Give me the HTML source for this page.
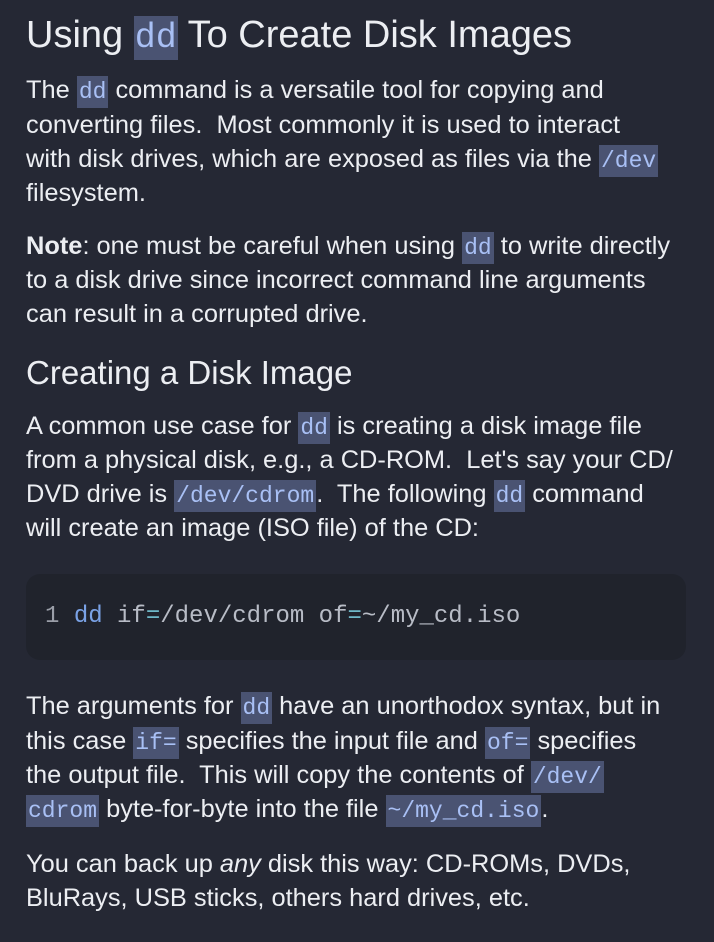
<!DOCTYPE html>
<html><head><meta charset="utf-8"><style>
html,body{margin:0;padding:0;background:#252834;width:714px;height:942px;overflow:hidden}
body{font-family:"Liberation Sans",sans-serif;color:#eceef2;position:relative}
.l{position:absolute;left:26px;white-space:nowrap;font-size:25.4px;line-height:34px;height:34px;letter-spacing:0}
.h1{font-size:38px;line-height:44px;height:44px}
.h2{font-size:33px;line-height:40px;height:40px}
code{font-family:"Liberation Mono",monospace;background:#4a5372;color:#a9c0f5;padding:3px 2px;font-size:23px;letter-spacing:0}
.h1 code{font-size:35px;padding:2px 1px}
.cb{position:absolute;left:26px;top:574px;width:660px;height:86px;background:#20232c;border-radius:14px}
.ct{position:absolute;left:45px;top:600px;font-family:"Liberation Mono",monospace;font-size:24px;line-height:34px;color:#b8bcc6;white-space:nowrap}
</style></head><body>
<div class="l h1" style="top:13px">Using <code>dd</code> To Create Disk Images</div>
<div class="l" style="top:73px">The <code>dd</code> command is a versatile tool for copying and</div>
<div class="l" style="top:108px">converting files.&nbsp; Most commonly it is used to interact</div>
<div class="l" style="top:142px">with disk drives, which are exposed as files via the <code>/dev</code></div>
<div class="l" style="top:176px">filesystem.</div>
<div class="l" style="top:229px"><b>Note</b>: one must be careful when using <code>dd</code> to write directly</div>
<div class="l" style="top:263px">to a disk drive since incorrect command line arguments</div>
<div class="l" style="top:297px">can result in a corrupted drive.</div>
<div class="l h2" style="top:353px">Creating a Disk Image</div>
<div class="l" style="top:409px">A common use case for <code>dd</code> is creating a disk image file</div>
<div class="l" style="top:443px">from a physical disk, e.g., a CD-ROM.&nbsp; Let's say your CD/</div>
<div class="l" style="top:477px">DVD drive is <code>/dev/cdrom</code>.&nbsp; The following <code>dd</code> command</div>
<div class="l" style="top:511px">will create an image (ISO file) of the CD:</div>
<div class="cb"></div>
<div class="ct"><span style="color:#9a9ea8">1</span> <span style="color:#7aa2e6">dd</span> if<span style="color:#6fb8c8">=</span>/dev/cdrom of<span style="color:#6fb8c8">=</span>~/my_cd.iso</div>
<div class="l" style="top:689px">The arguments for <code>dd</code> have an unorthodox syntax, but in</div>
<div class="l" style="top:724px">this case <code>if=</code> specifies the input file and <code>of=</code> specifies</div>
<div class="l" style="top:758px">the output file.&nbsp; This will copy the contents of <code>/dev/</code></div>
<div class="l" style="top:792px"><code>cdrom</code> byte-for-byte into the file <code>~/my_cd.iso</code>.</div>
<div class="l" style="top:847px">You can back up <i>any</i> disk this way: CD-ROMs, DVDs,</div>
<div class="l" style="top:881px">BluRays, USB sticks, others hard drives, etc.</div>
</body></html>
